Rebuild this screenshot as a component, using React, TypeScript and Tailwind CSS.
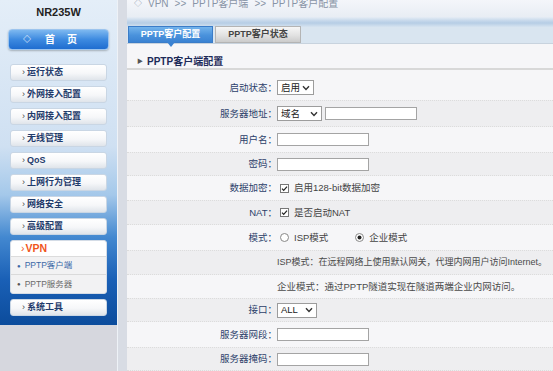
import React from "react";

const menu = ["运行状态", "外网接入配置", "内网接入配置", "无线管理", "QoS", "上网行为管理", "网络安全", "高级配置"];

function MenuItem({ label }: { label: string }) {
  return (
    <div className="mx-[10px] h-[17px] shrink-0 rounded-[3px] border border-[#c9d6e4] bg-[linear-gradient(180deg,#ffffff_0%,#f6f7f9_55%,#dfe4ea_100%)] flex items-center pl-[11px] text-[9px] font-bold text-[#1f3b6b] leading-none">
      <span className="mr-[2px] font-normal text-[#444]">›</span>
      {label}
    </div>
  );
}

function Chevron() {
  return (
    <svg width="8" height="6" viewBox="0 0 8 6" className="shrink-0">
      <path d="M1 1.2 L4 4.4 L7 1.2" fill="none" stroke="#333" strokeWidth="1.4" />
    </svg>
  );
}

function Select({ value, w }: { value: string; w: string }) {
  return (
    <div className={`${w} h-[15px] bg-white border border-[#9c9c9c] flex items-center justify-between pl-[3px] pr-[3px] text-[9.5px] text-[#222] leading-none`}>
      <span>{value}</span>
      <Chevron />
    </div>
  );
}

function Input({ w = "w-[92px]" }: { w?: string }) {
  return <div className={`${w} h-[13px] bg-white border border-[#a4a4a4]`} />;
}

function Check({ text }: { text: string }) {
  return (
    <div className="flex items-center gap-[5px] pl-[3px] text-[9.5px] text-[#444] leading-none">
      <svg width="9" height="9" viewBox="0 0 9 9">
        <rect x="0.5" y="0.5" width="8" height="8" fill="#fff" stroke="#777" />
        <path d="M2 4.6 L3.7 6.3 L7 2.6" fill="none" stroke="#222" strokeWidth="1.2" />
      </svg>
      {text}
    </div>
  );
}

function Radio({ on, text }: { on?: boolean; text: string }) {
  return (
    <div className="flex items-center gap-[5px] text-[9.5px] text-[#444] leading-none">
      <svg width="9" height="9" viewBox="0 0 9 9">
        <circle cx="4.5" cy="4.5" r="4" fill="#fff" stroke="#888" />
        {on && <circle cx="4.5" cy="4.5" r="2" fill="#222" />}
      </svg>
      {text}
    </div>
  );
}

function Row({ h, dark, label, children }: { h: string; dark?: boolean; label?: string; children: React.ReactNode }) {
  return (
    <div
      className={`${h} flex items-center ${
        dark ? "bg-[#eeeef0] border-y border-dotted border-[#dcdcdc]" : ""
      }`}
    >
      <div className="w-[150px] shrink-0 text-right text-[9.5px] text-[#2c3f6a] leading-none">
        {label ? `${label}：` : ""}
      </div>
      <div className="flex items-center">{children}</div>
    </div>
  );
}

export default function App() {
  return (
    <div className="w-[553px] h-[371px] overflow-hidden flex font-[family-name:'Liberation_Sans','Noto_Sans_CJK_SC',sans-serif]">
      {/* sidebar */}
      <div className="w-[117px] shrink-0 flex flex-col bg-[#d6d7de]">
        <div className="h-[325px] flex flex-col bg-[linear-gradient(180deg,#e4eef8_0%,#cfe0f2_45%,#a4c8ea_60%,#4388d0_73%,#1a60b6_86%,#0c4c9c_100%)]">
          <div className="pt-[5px] h-[20px] text-center text-[11px] font-bold text-[#222] leading-[14px]">NR235W</div>
          <div className="mt-[9px] mx-[8px] h-[21px] rounded-[4px] border border-[#9cc4ee] bg-[linear-gradient(180deg,#7db8f0_0%,#3d8ae0_50%,#1f6dd0_100%)] shadow-[0_1px_2px_rgba(0,0,0,0.25)] flex items-center text-white text-[10px] font-bold leading-none">
            <span className="ml-[14px] text-[8px]">◇</span>
            <span className="ml-[14px]">首</span>
            <span className="ml-[12px]">页</span>
          </div>
          <div className="mt-[14px] flex flex-col gap-[5px]">
            {menu.map((m) => (
              <MenuItem key={m} label={m} />
            ))}
            <div className="mx-[10px] rounded-[3px] border border-[#d4dce6] bg-[#f2f2f3] flex flex-col">
              <div className="h-[16px] bg-white rounded-t-[3px] flex items-center pl-[10px] text-[10.5px] font-bold text-[#f0561c] leading-none border-b border-[#dcdcdc]">
                <span className="mr-[1px] font-normal">›</span>VPN
              </div>
              <div className="h-[18px] flex items-center pl-[6px] text-[8.5px] text-[#3a68a6] leading-none border-b border-[#dadada]">
                <span className="mr-[4px] text-[6px]">●</span>PPTP客户端
              </div>
              <div className="h-[18px] flex items-center pl-[6px] text-[8.5px] text-[#6a6a6a] leading-none">
                <span className="mr-[4px] text-[6px] text-[#555]">●</span>PPTP服务器
              </div>
            </div>
            <MenuItem label="系统工具" />
          </div>
        </div>
      </div>
      <div className="w-[10px] shrink-0 bg-[#d8dce4] border-l border-[#eef2f7]" />

      {/* main */}
      <div className="flex-1 flex flex-col bg-[#f6f6f8]">
        <div className="h-[17px] bg-[linear-gradient(180deg,#f4f6fa_0%,#e8edf4_100%)] flex items-start pl-[7px] text-[10px] text-[#8894a6] leading-none">
          <div className="-mt-[1px] flex items-center gap-[6px]">
            <span className="text-[8px]">◇</span>
            <span>VPN</span>
            <span>&gt;&gt;</span>
            <span>PPTP客户端</span>
            <span>&gt;&gt;</span>
            <span>PPTP客户配置</span>
          </div>
        </div>
        <div className="h-[10px] bg-[linear-gradient(180deg,#e6edf5_0%,#c3d6ea_40%,#b6cde5_60%,#d6e3f0_100%)]" />
        <div className="h-[17px] bg-[#d9e5f0] border-b border-[#c8d3de] flex items-end pl-[1px] gap-[2px]">
          <div className="relative w-[85px] h-[17px] bg-[linear-gradient(180deg,#74b4ec_0%,#4a92dc_55%,#3a82d2_100%)] border border-[#3a7cc8] flex items-center justify-center text-white text-[9px] font-bold leading-none">
            PPTP客户配置
            <span className="absolute left-1/2 -translate-x-1/2 top-full w-0 h-0 border-x-[4px] border-x-transparent border-t-[5px] border-t-[#3a82d2]" />
          </div>
          <div className="w-[86px] h-[17px] bg-[linear-gradient(180deg,#f6f6f6_0%,#e2e2e2_55%,#cbcbcb_100%)] border border-[#b4b4b4] flex items-center justify-center text-[#444] text-[9px] font-bold leading-none">
            PPTP客户状态
          </div>
        </div>

        <div className="h-[26px] pt-[11px] flex items-center pl-[10px] border-b-2 border-[#d8d8d8]">
          <span className="text-[6px] text-[#555] mr-[4px]">▶</span>
          <span className="text-[10px] font-bold text-[#1c2a58] leading-none">PPTP客户端配置</span>
        </div>

        <div className="mt-[5px] flex flex-col">
          <Row h="h-[25px]" label="启动状态">
            <Select value="启用" w="w-[37px]" />
          </Row>
          <Row h="h-[27px]" dark label="服务器地址">
            <Select value="域名" w="w-[45px]" />
            <div className="ml-[3px]">
              <Input w="w-[92px]" />
            </div>
          </Row>
          <Row h="h-[25px]" label="用户名">
            <Input />
          </Row>
          <Row h="h-[24px]" dark label="密码">
            <Input />
          </Row>
          <Row h="h-[24px]" label="数据加密">
            <Check text="启用128-bit数据加密" />
          </Row>
          <Row h="h-[25px]" dark label="NAT">
            <Check text="是否启动NAT" />
          </Row>
          <Row h="h-[25px]" label="模式">
            <div className="pl-[3px] flex items-center gap-[27px]">
              <Radio text="ISP模式" />
              <Radio on text="企业模式" />
            </div>
          </Row>
          <Row h="h-[25px]" dark>
            <span className="text-[9px] text-[#4a4a4a] leading-none whitespace-nowrap">
              ISP模式：在远程网络上使用默认网关，代理内网用户访问Internet。
            </span>
          </Row>
          <Row h="h-[23px]">
            <span className="text-[9.5px] text-[#4a4a4a] leading-none whitespace-nowrap">
              企业模式：通过PPTP隧道实现在隧道两端企业内网访问。
            </span>
          </Row>
          <Row h="h-[24px]" dark label="接口">
            <Select value="ALL" w="w-[40px]" />
          </Row>
          <Row h="h-[25px]" label="服务器网段">
            <Input />
          </Row>
          <Row h="h-[24px]" dark label="服务器掩码">
            <Input />
          </Row>
        </div>
      </div>
    </div>
  );
}
